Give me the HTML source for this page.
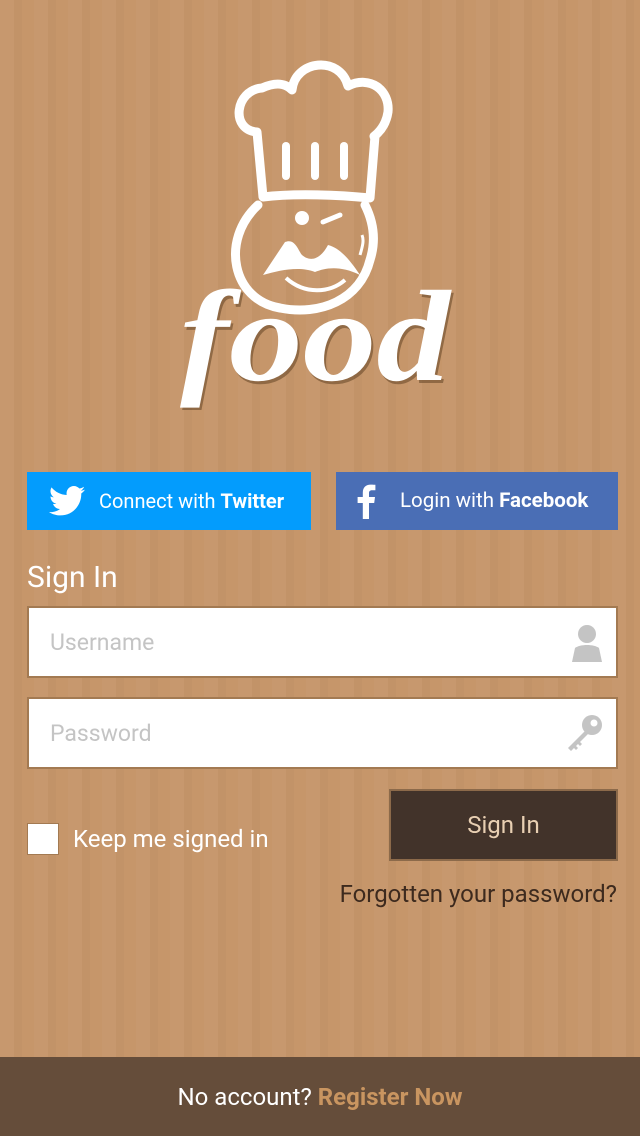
<!DOCTYPE html>
<html><head><meta charset="utf-8"><style>
*{margin:0;padding:0;box-sizing:border-box}
body{width:640px;height:1136px;overflow:hidden;position:relative;font-family:"Roboto","Liberation Sans",sans-serif;
background:#c6966a repeating-linear-gradient(90deg,rgba(255,255,255,0.025) 0 14px,rgba(0,0,0,0.018) 14px 22px,rgba(255,255,255,0) 22px 34px);}
.abs{position:absolute}
.btn{position:absolute;top:472px;height:58px;color:#fff;font-size:20px;display:flex;align-items:center}
.inp{position:absolute;left:27px;width:591px;height:72px;background:#fff;border:2px solid #a37a52;font-size:23px;color:#c4c4c4;padding-left:21px;display:flex;align-items:center}
</style></head><body>
<svg class="abs" style="left:170px;top:50px" width="300" height="360" viewBox="0 0 300 360">
<g fill="none" stroke="#fff" stroke-width="9" stroke-linecap="round" stroke-linejoin="round">
<path d="M93 147 L87 82 C60 80 65 40 92 38 C110 30 118 36 122 40 C125 10 170 5 178 36 C200 25 220 40 218 62 C215 82 200 88 205 86 L200 148 C170 145 125 143 93 147Z"/>
<path d="M88 155 C50 190 62 250 110 258 C150 266 190 250 200 210 C208 185 200 165 195 155"/>
</g>
<g fill="#fff">
<rect x="112" y="92" width="8" height="38" rx="4"/><rect x="141" y="92" width="8" height="38" rx="4"/><rect x="170" y="92" width="8" height="38" rx="4"/>
<circle cx="132" cy="168" r="7"/>
<path d="M153 172 L170 165" stroke="#fff" stroke-width="5" stroke-linecap="round"/>
<path d="M93 225 L115 192 C125 188 128 200 132 205 C140 212 150 210 158 195 C170 198 180 210 190 225 C170 215 155 218 145 222 C130 216 110 220 93 225Z"/>
<path d="M116 228 C135 245 160 243 175 230" stroke="#fff" stroke-width="4" fill="none"/>
<path d="M190 205 C193 195 194 190 192 185" stroke="#fff" stroke-width="3" fill="none"/>
</g>
<text x="10" y="330" font-family="Liberation Serif,serif" font-style="italic" font-weight="bold" font-size="130" fill="#fff" style="filter:drop-shadow(2px 3px 0 rgba(90,60,30,0.5))" textLength="270" lengthAdjust="spacingAndGlyphs">food</text>
</svg>
<div class="btn" style="left:27px;width:284px;background:#039cfd">
<svg style="margin-left:22px" width="36" height="32" viewBox="0 0 24 20"><path fill="#fff" d="M24 2.4c-.9.4-1.8.6-2.8.8 1-.6 1.8-1.6 2.2-2.7-1 .6-2 1-3.1 1.2C19.3.7 18 0 16.6 0c-2.7 0-4.9 2.2-4.9 4.9 0 .4 0 .8.1 1.1C7.700 5.8 4.1 3.9 1.7.9c-.4.7-.7 1.6-.7 2.5 0 1.7.9 3.2 2.2 4.1-.8 0-1.6-.2-2.2-.6v.1c0 2.4 1.7 4.4 3.9 4.8-.4.1-.8.2-1.3.2-.3 0-.6 0-.9-.1.6 2 2.4 3.4 4.6 3.4-1.7 1.3-3.8 2.1-6.1 2.1H0c2.2 1.4 4.8 2.2 7.5 2.2 9.1 0 14-7.5 14-14v-.6c1-.7 1.8-1.6 2.5-2.6z"/></svg>
<span style="margin-left:14px">Connect with <b>Twitter</b></span></div>
<div class="btn" style="left:336px;width:282px;background:#4a6eb5">
<svg style="margin-left:20px" width="20" height="36" viewBox="0 0 10 18"><path fill="#fff" d="M6.5 18V10h2.6l.4-3H6.5V5.1c0-.9.3-1.5 1.6-1.5H9.7V.9C9.4.9 8.4.8 7.3.8 5 .8 3.4 2.2 3.4 4.8V7H.8v3h2.6v8z"/></svg>
<span style="margin-left:24px;font-size:20.5px">Login with <b>Facebook</b></span></div>
<div class="abs" style="left:27px;top:560px;font-size:30px;color:#fff">Sign In</div>
<div class="inp" style="top:606px">Username
<svg class="abs" style="right:12px;top:16px" width="34" height="38" viewBox="0 0 34 38"><circle cx="17" cy="10" r="9" fill="#c4c4c4"/><path d="M2 38 L5 24 C10 20 24 20 29 24 L32 38Z" fill="#c4c4c4"/></svg></div>
<div class="inp" style="top:697px">Password
<svg class="abs" style="right:12px;top:14px" width="40" height="40" viewBox="0 0 40 40"><circle cx="28" cy="12" r="10" fill="#c4c4c4"/><circle cx="30" cy="10" r="3.5" fill="#fff"/><path d="M22 17 L4 35 L7 38 L10 35 L12 37 L14 35 L12 33 L14 31 L16 33 L18 31 L16 29 L25 20Z" fill="#c4c4c4"/></svg></div>
<div class="abs" style="left:27px;top:823px;width:32px;height:32px;background:#fff;border:1px solid #a37a52"></div>
<div class="abs" style="left:73px;top:825px;font-size:24px;color:#fff">Keep me signed in</div>
<div class="abs" style="left:389px;top:789px;width:229px;height:72px;background:#42332a;border:2px solid #8c6a4a;color:#e8cfb2;font-size:24px;display:flex;align-items:center;justify-content:center">Sign In</div>
<div class="abs" style="right:23px;top:880px;font-size:24px;color:#3d2a1e">Forgotten your password?</div>
<div class="abs" style="left:0;top:1057px;width:640px;height:79px;background:#654d3a;color:#fff;font-size:24px;display:flex;align-items:center;justify-content:center">No account?&nbsp;<b style="color:#c99560">Register Now</b></div>
</body></html>
